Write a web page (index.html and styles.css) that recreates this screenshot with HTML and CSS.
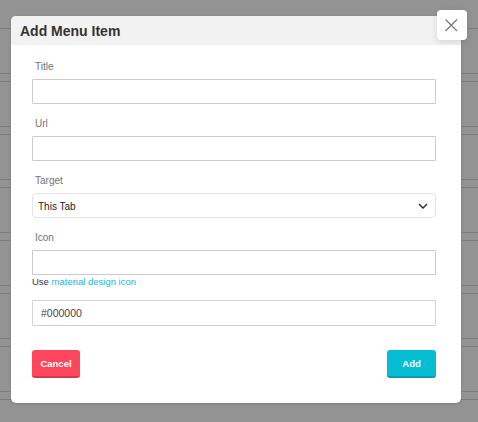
FILE: index.html
```html
<!DOCTYPE html>
<html>
<head>
<meta charset="utf-8">
<link rel="stylesheet" href="styles.css">
</head>
<body>
<div class="backdrop"></div>
<div class="modal">
  <div class="modal-header">
    <h2 class="modal-title">Add Menu Item</h2>
  </div>
  <button class="close-btn" aria-label="Close">
    <svg width="30" height="30" viewBox="0 0 30 30"><path d="M8.5 9.5 L20 21 M20 9.5 L8.5 21" stroke="#7a7a7a" stroke-width="1.3" fill="none"/></svg>
  </button>
  <div class="modal-body">
    <div class="field">
      <label class="label">Title</label>
      <div class="input"></div>
    </div>
    <div class="field">
      <label class="label">Url</label>
      <div class="input"></div>
    </div>
    <div class="field">
      <label class="label">Target</label>
      <div class="select">
        <span>This Tab</span>
        <svg width="10" height="6" viewBox="0 0 10 6"><polyline points="1,1 5,5 9,1" stroke="#333" stroke-width="1.5" fill="none"/></svg>
      </div>
    </div>
    <div class="field field-icon">
      <label class="label">Icon</label>
      <div class="input"></div>
      <div class="hint">Use <a class="link">material design icon</a></div>
    </div>
    <div class="input color-input">#000000</div>
    <div class="actions">
      <button class="btn btn-cancel">Cancel</button>
      <button class="btn btn-add">Add</button>
    </div>
  </div>
</div>
</body>
</html>
```
FILE: styles.css
```css
html, body {
  margin: 0;
  padding: 0;
  height: 422px;
  overflow: hidden;
}
body {
  background: #939393;
  font-family: "Liberation Sans", Arial, sans-serif;
  position: relative;
}
.backdrop {
  height: 100%;
  background-image: repeating-linear-gradient(to bottom, #7c7c7c 0 1px, transparent 1px 45px, #7c7c7c 45px 46px, transparent 46px 53px);
  background-repeat: no-repeat;
  background-size: 100% 400px;
  background-position: 0 28px;
}
.modal {
  position: absolute;
  left: 11px;
  top: 16px;
  width: 450px;
  background: #fff;
  border-radius: 5px;
  padding-bottom: 25px;
  box-shadow: 0 1px 3px rgba(0,0,0,0.15);
}
.modal-header {
  height: 29px;
  background: #f2f2f2;
  border-radius: 5px 5px 0 0;
  display: flex;
  align-items: center;
  padding-left: 9px;
}
.modal-title {
  margin: 0;
  font-size: 14px;
  font-weight: bold;
  color: #333;
  line-height: 16px;
  padding-top: 1px;
}
.close-btn {
  position: absolute;
  left: 426px;
  top: -6px;
  width: 30px;
  height: 30px;
  padding: 0;
  border: none;
  background: #fff;
  border-radius: 4px;
  box-shadow: 0 2px 6px rgba(0,0,0,0.12);
  display: flex;
}
.modal-body {
  padding: 14px 25px 0 21px;
}
.field {
  display: flex;
  flex-direction: column;
  margin-bottom: 12px;
}
.label {
  font-size: 10px;
  line-height: 14px;
  color: #737373;
  padding-left: 3px;
  padding-top: 1px;
  margin-bottom: 5px;
}
.input {
  height: 25px;
  box-sizing: border-box;
  border: 1px solid #cbcbcb;
  border-radius: 1px;
}
.select {
  height: 25px;
  box-sizing: border-box;
  border: 1px solid #e4e4e4;
  border-radius: 4px;
  display: flex;
  align-items: center;
  justify-content: space-between;
  padding: 0 7px 0 5px;
  font-size: 10px;
  color: #222;
}
.select span {
  padding-top: 1px;
}
.field-icon {
  margin-bottom: 12px;
}
.hint {
  font-size: 9.5px;
  line-height: 12px;
  color: #333;
  margin-top: 1px;
}
.link {
  color: #1bb7d0;
}
.color-input {
  height: 26px;
  border-color: #d2d3da;
  display: flex;
  align-items: center;
  padding-left: 8px;
  font-size: 10.5px;
  color: #444;
}
.actions {
  display: flex;
  justify-content: space-between;
  margin-top: 24px;
}
.btn {
  height: 28px;
  box-sizing: border-box;
  border: none;
  border-radius: 3px;
  font-family: "Liberation Sans", Arial, sans-serif;
  font-size: 9.5px;
  font-weight: bold;
  color: #fff;
  padding: 0;
  padding-top: 1px;
}
.btn-cancel {
  width: 48px;
  background: #fe475d;
  border-bottom: 2px solid #d8384b;
}
.btn-add {
  width: 49px;
  background: #06bdd4;
  border-bottom: 2px solid #0a9bae;
}
```
